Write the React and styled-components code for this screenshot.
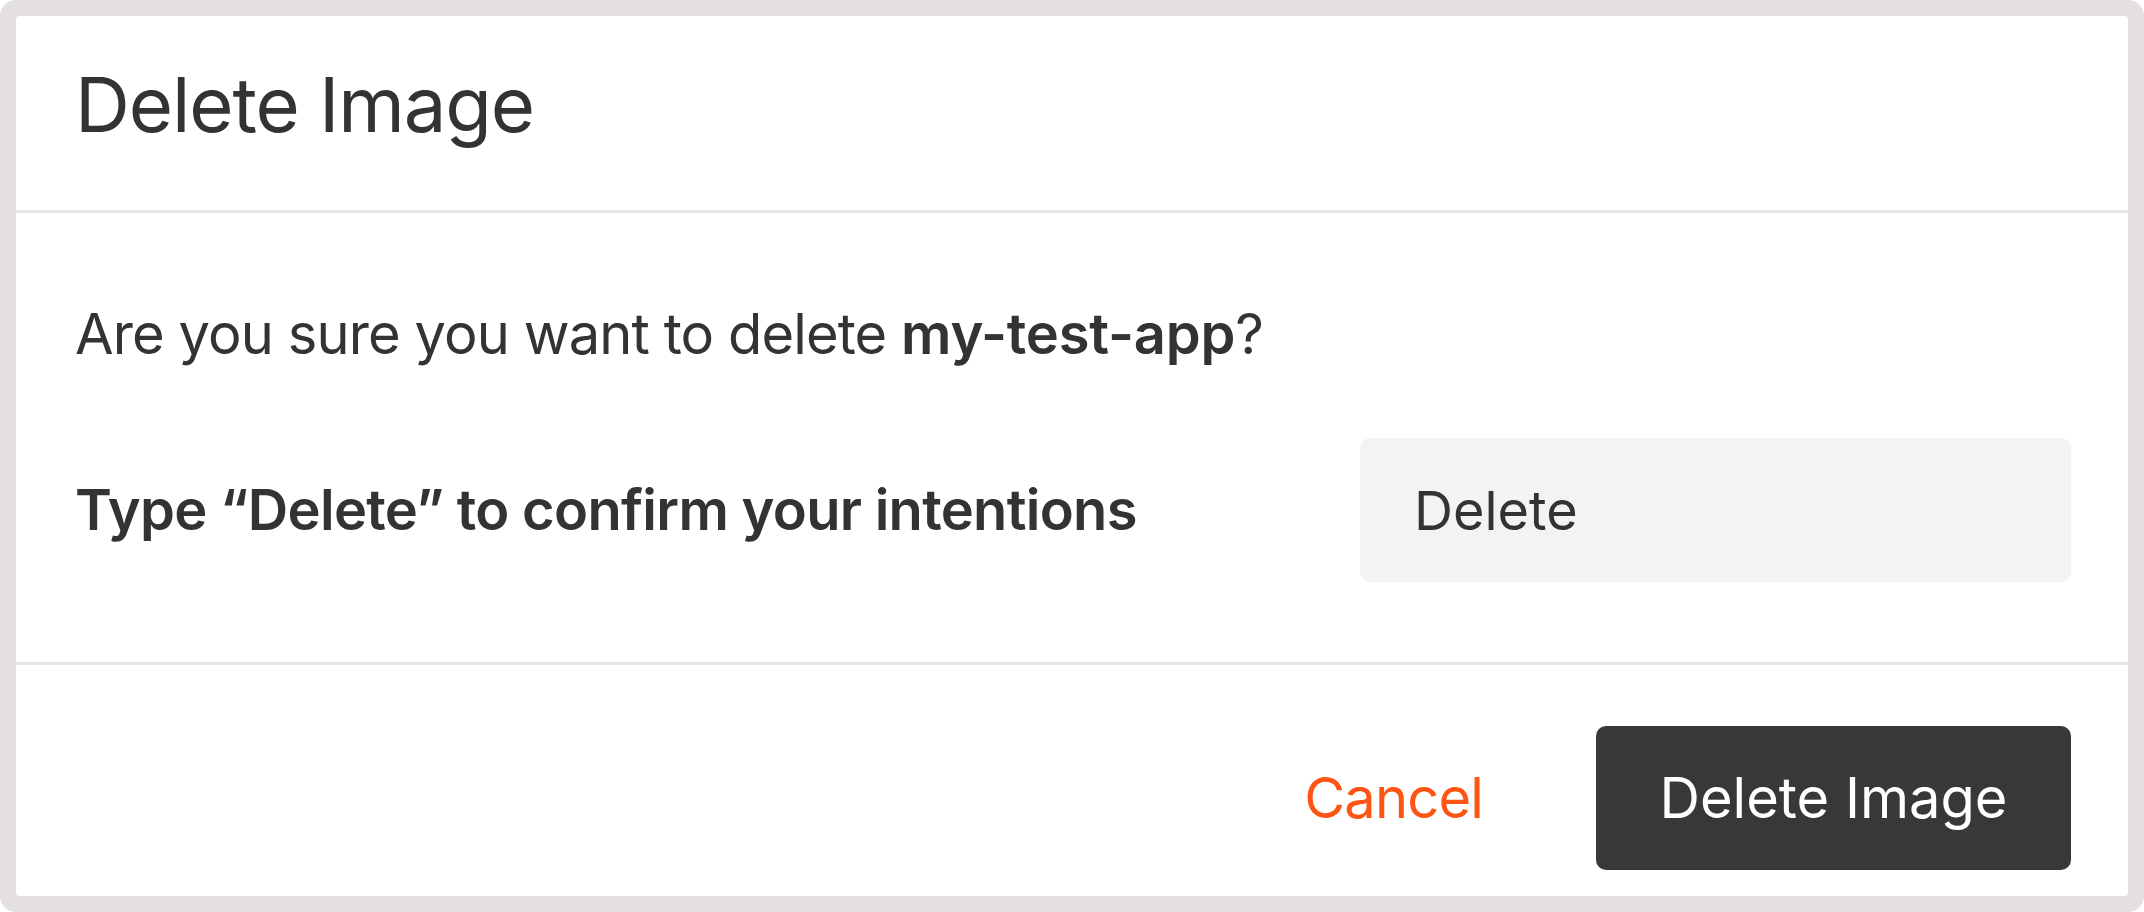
import styled, { createGlobalStyle } from 'styled-components'

const GlobalStyle = createGlobalStyle`
	html, body {
		margin: 0;
		padding: 0;
		background: #ffffff;
	}
	* {
		box-sizing: border-box;
	}
`;

const Frame = styled.div`
	width: 2144px;
	height: 912px;
	padding: 16px;
	background: #e4e0df;
	border-radius: 16px;
	font-family: Inter, "Liberation Sans", sans-serif;
	color: #333333;
`;

const Card = styled.div`
	height: 100%;
	background: #ffffff;
	border-radius: 4px;
	display: flex;
	flex-direction: column;
`;

const Header = styled.div`
	height: 197px;
	padding: 50px 59px 0;
	border-bottom: 3px solid #e6e6e6;
`;

const Title = styled.h1`
	margin: 0;
	font-size: 76px;
	line-height: 1;
	font-weight: 400;
	letter-spacing: -1.1px;
`;

const Body = styled.div`
	padding: 93px 57px 80px 59px;
	border-bottom: 3px solid #e6e6e6;
	display: flex;
	flex-direction: column;
	gap: 76px;
`;

const Question = styled.p`
	margin: 0;
	font-size: 56px;
	line-height: 1;
	letter-spacing: -0.9px;

	& b {
		font-weight: 600;
		letter-spacing: -0.2px;
	}
`;

const ConfirmRow = styled.div`
	display: flex;
	align-items: center;
	justify-content: space-between;
`;

const Label = styled.label`
	font-size: 56px;
	font-weight: 600;
	line-height: 1;
	letter-spacing: -0.7px;
`;

const Input = styled.input`
	width: 711px;
	height: 144px;
	padding: 0 54px;
	border: none;
	border-radius: 10px;
	background: #f3f3f3;
	font-family: inherit;
	font-size: 54px;
	color: #333333;
	outline: none;
`;

const Footer = styled.div`
	flex: 1;
	padding: 61px 57px 0;
	display: flex;
	justify-content: flex-end;
	align-items: flex-start;
	gap: 113px;
`;

const CancelButton = styled.button`
	height: 144px;
	padding: 0;
	border: none;
	background: none;
	font-family: inherit;
	font-size: 56px;
	letter-spacing: -0.8px;
	color: #ff5514;
	cursor: pointer;
`;

const DeleteButton = styled.button`
	width: 475px;
	height: 144px;
	border: none;
	border-radius: 10px;
	background: #383838;
	font-family: inherit;
	font-size: 56px;
	color: #ffffff;
	cursor: pointer;
`;

const App = () => {
	return (
		<>
			<GlobalStyle />
			<Frame>
				<Card>
					<Header>
						<Title>Delete Image</Title>
					</Header>
					<Body>
						<Question>Are you sure you want to delete <b>my-test-app</b>?</Question>
						<ConfirmRow>
							<Label htmlFor="confirm">Type “Delete” to confirm your intentions</Label>
							<Input id="confirm" defaultValue="Delete" />
						</ConfirmRow>
					</Body>
					<Footer>
						<CancelButton>Cancel</CancelButton>
						<DeleteButton>Delete Image</DeleteButton>
					</Footer>
				</Card>
			</Frame>
		</>
	)
}

export default App
